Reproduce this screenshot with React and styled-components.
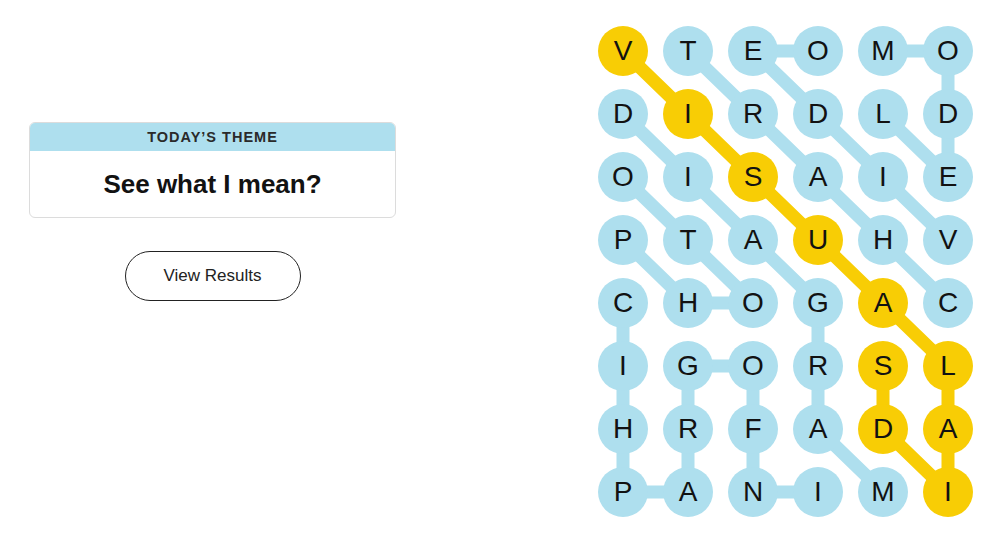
import React from 'react';
import styled, { createGlobalStyle } from 'styled-components';

const GlobalStyle = createGlobalStyle`
  html, body {
    margin: 0;
    padding: 0;
    background: #ffffff;
  }
  body {
    font-family: "Liberation Sans", Arial, sans-serif;
    color: #121212;
  }
`;

const BLUE = '#aedfee';
const YELLOW = '#f8cd05';
const COL_PITCH = 65;
const ROW_PITCH = 63;
const CELL = 50;

const LETTERS = [
  'VTEOMO',
  'DIRDLD',
  'OISAIE',
  'PTAUHV',
  'CHOGAC',
  'IGORSL',
  'HRFADA',
  'PANIMI',
];

const SPANGRAM = [[0, 0], [1, 1], [2, 2], [3, 3], [4, 4], [5, 5], [6, 5], [7, 5], [6, 4], [5, 4]];

const WORDS = [
  [[0, 4], [0, 5], [1, 5], [2, 5], [1, 4]],
  [[3, 5], [2, 4], [1, 3], [0, 2], [0, 3]],
  [[4, 5], [3, 4], [2, 3], [1, 2], [0, 1]],
  [[1, 0], [2, 1], [3, 2], [4, 3], [5, 3], [6, 3], [7, 4]],
  [[3, 0], [4, 1], [4, 2], [3, 1], [2, 0]],
  [[7, 3], [7, 2], [6, 2], [5, 2], [5, 1], [6, 1], [7, 1], [7, 0], [6, 0], [5, 0], [4, 0]],
];

const isSpangram = (r, c) => SPANGRAM.some(([sr, sc]) => sr === r && sc === c);

const Page = styled.main`
  display: flex;
  align-items: flex-start;
  width: 1000px;
  height: 547px;
  padding-top: 26px;
  box-sizing: border-box;
`;

const Side = styled.section`
  display: flex;
  flex-direction: column;
  align-items: center;
  width: 367px;
  margin-left: 29px;
  margin-top: 96px;
`;

const ThemeCard = styled.div`
  width: 100%;
  border: 1px solid #dcdcdc;
  border-radius: 6px;
  overflow: hidden;
  box-sizing: border-box;
`;

const ThemeLabel = styled.div`
  height: 28px;
  background: ${BLUE};
  display: flex;
  align-items: center;
  justify-content: center;
  font-size: 14.5px;
  font-weight: 700;
  letter-spacing: 1px;
  color: #2a2a2a;
  text-transform: uppercase;
`;

const ThemeText = styled.h2`
  margin: 0;
  height: 66px;
  display: flex;
  align-items: center;
  justify-content: center;
  font-size: 26px;
  font-weight: 700;
  color: #121212;
`;

const ResultsButton = styled.button`
  margin-top: 33px;
  width: 176px;
  height: 50px;
  border: 1px solid #222;
  border-radius: 25px;
  background: #fff;
  font-family: "Liberation Sans", Arial, sans-serif;
  font-size: 17px;
  color: #222;
  cursor: pointer;
`;

const Board = styled.div`
  position: relative;
  margin-left: 202px;
  display: grid;
  grid-template-columns: repeat(6, ${CELL}px);
  grid-auto-rows: ${CELL}px;
  column-gap: ${COL_PITCH - CELL}px;
  row-gap: ${ROW_PITCH - CELL}px;
`;

const Links = styled.svg`
  position: absolute;
  left: 0;
  top: 0;
  width: 100%;
  height: 100%;
  overflow: visible;
`;

const Tile = styled.div`
  position: relative;
  width: ${CELL}px;
  height: ${CELL}px;
  border-radius: 50%;
  background: ${(p) => (p.$found ? YELLOW : BLUE)};
  display: flex;
  align-items: center;
  justify-content: center;
  font-size: 28px;
  line-height: 1;
  color: #121212;
`;

const toPoints = (path) =>
  path
    .map(([r, c]) => `${CELL / 2 + c * COL_PITCH},${CELL / 2 + r * ROW_PITCH}`)
    .join(' ');

const Link = ({ path, color }) => (
  <polyline
    points={toPoints(path)}
    fill="none"
    stroke={color}
    strokeWidth="13"
    strokeLinecap="round"
    strokeLinejoin="round"
  />
);

export default function App() {
  return (
    <>
      <GlobalStyle />
      <Page>
        <Side>
          <ThemeCard>
            <ThemeLabel>Today’s Theme</ThemeLabel>
            <ThemeText>See what I mean?</ThemeText>
          </ThemeCard>
          <ResultsButton>View Results</ResultsButton>
        </Side>
        <Board>
          <Links>
            {WORDS.map((w, i) => (
              <Link key={i} path={w} color={BLUE} />
            ))}
            <Link path={SPANGRAM} color={YELLOW} />
          </Links>
          {LETTERS.map((row, r) =>
            row.split('').map((ch, c) => (
              <Tile key={`${r}-${c}`} $found={isSpangram(r, c)}>
                {ch}
              </Tile>
            ))
          )}
        </Board>
      </Page>
    </>
  );
}
